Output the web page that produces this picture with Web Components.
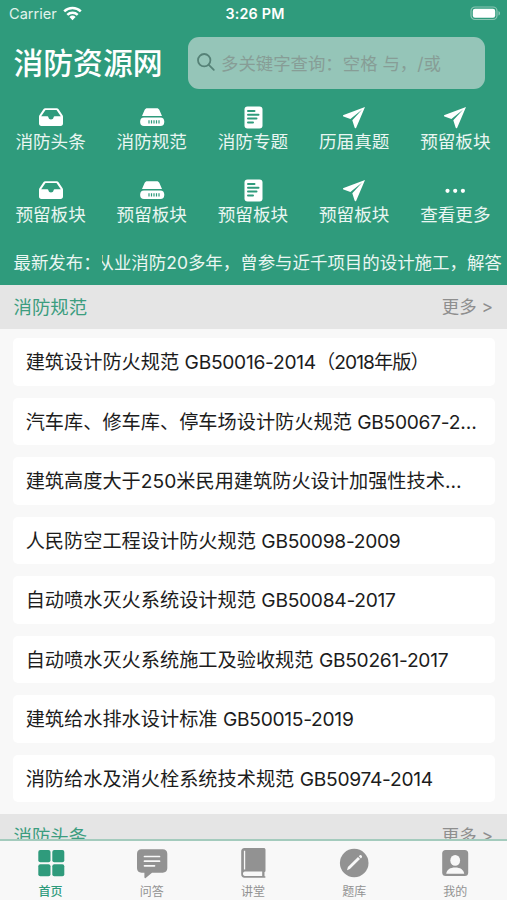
<!DOCTYPE html>
<html lang="zh-CN">
<head>
<meta charset="utf-8">
<title>消防资源网</title>
<style>
  body {
    margin: 0;
    font-family: Inter, "Noto Sans CJK SC", sans-serif;
  }
</style>
</head>
<body>
<fire-app></fire-app>

<script>
const icons = {
  inbox: `<svg width="26" height="24" viewBox="0 0 26 24"><path fill="#fff" fill-rule="evenodd" d="M7.2 3.2h11.6c.7 0 1.200.3 1.600.9l4 6c.4.500.6 1 .6 1.600v6.800c0 1.500-.9 2.500-2.400 2.500H3.400C1.900 21 1 20 1 18.500v-6.800c0-.6.2-1.100.6-1.600l4-6c.4-.6.9-.9 1.600-.9zM7.500 4.900 3.200 11.300h6.100c.6 0 1 .4 1.100 1 .3 1.400 1.300 2.200 2.600 2.200s2.300-.8 2.600-2.200c.1-.6.5-1 1.100-1h6.100L18.500 4.900z"/></svg>`,
  drive: `<svg width="26" height="24" viewBox="0 0 26 24"><g fill="#fff"><path d="M8.300 3.200h9.400c1.300 0 2.100.5 2.600 1.600l2.700 6.100H3l2.700-6.100c.5-1.100 1.300-1.600 2.600-1.600z"/><rect x="1.200" y="12.400" width="24" height="8.600" rx="3.800"/></g><path stroke="#2f9b7c" stroke-width="1.200" d="M10 15.200v3.200M12.500 15.200v3.200M15 15.200v3.200M17.500 15.200v3.200M20 15.200v3.200"/></svg>`,
  doc: `<svg width="26" height="24" viewBox="0 0 26 24"><rect x="4.500" y="1.500" width="18" height="22" rx="3" fill="#fff"/><path stroke="#2f9b7c" stroke-width="2" stroke-linecap="round" d="M8 6h6.500M8 9.800h10.500M8 13.600h8.500M8 17.400h5"/></svg>`,
  plane: `<svg width="26" height="24" viewBox="0 0 26 24"><path fill="#fff" d="M24 1.900 2.600 10c-.8.300-.8 1.100-.1 1.500l6.900 2.500L21.200 4.600 11.300 15.200l2.300 7.400c.3.800 1.200.9 1.600.1z"/></svg>`,
  more: `<svg width="26" height="24" viewBox="0 0 26 24"><g fill="#fff"><circle cx="5.500" cy="12.800" r="2.100"/><circle cx="13.200" cy="12.800" r="2.100"/><circle cx="20.900" cy="12.800" r="2.100"/></g></svg>`,
  home: `<svg width="32" height="32" viewBox="0 0 32 32"><g fill="currentColor"><rect x="3.300" y="3" width="12.200" height="12.300" rx="2"/><rect x="17.300" y="3" width="12" height="12.300" rx="2"/><rect x="3.300" y="17.200" width="12.200" height="12" rx="2"/><rect x="17.300" y="17.200" width="12" height="12" rx="2"/></g></svg>`,
  chat: `<svg width="32" height="32" viewBox="0 0 32 32"><path fill="currentColor" d="M5.500 2.300h21.200c2.800 0 4.600 1.700 4.600 4.500v14.500c0 2.700-1.800 4.400-4.600 4.400H16l-6.300 5.200c-.7.500-1.300.2-1.300-.6v-4.600H5.500c-2.800 0-4.500-1.700-4.500-4.400V6.800c0-2.800 1.700-4.500 4.500-4.500z"/><path stroke="#f8f8f8" stroke-width="1.700" stroke-linecap="round" d="M8.500 9.500h15M8.500 14.200h15M8.500 18.800h10"/></svg>`,
  book: `<svg width="32" height="32" viewBox="0 0 32 32"><path fill="currentColor" fill-rule="evenodd" d="M7.500 1h19.200c1 0 1.800.7 1.800 1.700v21c0 .7-.4 1.200-1 1.400v4.100h.5c.7 0 .7 1.600 0 1.600H7.500c-2.100 0-3.300-1.500-3.300-3.500v-23C4.200 2.400 5.400 1 7.500 1zm-.6 2.700v18.800h1.300V3.700zm1 20.700c-2.600 0-2.600 4.600 0 4.600h17.300v-4.600z"/></svg>`,
  pencil: `<svg width="32" height="32" viewBox="0 0 32 32"><circle cx="16.200" cy="16" r="14.300" fill="currentColor"/><path fill="#f8f8f8" d="m9 23.200.9-3.200L20 10l2 2-10.100 10.100zM20.800 9.200l.8-.8c1.200-1 3.200.9 2.200 2.200l-.9.800z"/></svg>`,
  person: `<svg width="32" height="32" viewBox="0 0 32 32"><rect x="3.200" y="3" width="26" height="26" rx="3.500" fill="currentColor"/><ellipse cx="16.200" cy="13.400" rx="4.900" ry="5.400" fill="#f8f8f8"/><path fill="#f8f8f8" d="M7.200 26.800c.6-4.200 4-6.200 9-6.200s8.400 2 9 6.200z"/></svg>`
};

class StatusBar extends HTMLElement {
  constructor() {
    super();
    this.attachShadow({ mode: 'open' }).innerHTML = `
      <style>
        :host {
          display: grid;
          grid-template-columns: 1fr auto 1fr;
          align-items: center;
          height: 27px;
          padding: 0 6px 0 9px;
          color: #fff;
          font-size: 14.600px;
        }
        .left { display: flex; align-items: center; gap: 6px; color: #e2f2ec; }
        .time { font-size: 14.300px; font-weight: 600; letter-spacing: .2px; }
        svg { display: block; }
        .battery { justify-self: end; }
      </style>
      <div class="left">
        <span>Carrier</span>
        <svg width="19" height="15" viewBox="0 0 19 15"><g fill="none" stroke="#fff" stroke-width="2.500"><path d="M1.200 5.300a12 12 0 0 1 16.600 0"/><path d="M4.300 8.900a7.500 7.500 0 0 1 10.400 0"/></g><path fill="#fff" d="M6.400 11a4.500 4.500 0 0 1 6.200 0l-3.100 3.200z"/></svg>
      </div>
      <span class="time">3:26 PM</span>
      <svg class="battery" width="31" height="15" viewBox="0 0 31 15"><rect x="1" y="1" width="26" height="12.500" rx="4" fill="none" stroke="#8bc6b4" stroke-width="1.200"/><rect x="2.800" y="2.700" width="22.400" height="9.100" rx="2.200" fill="#fff"/><path fill="#8bc6b4" d="M28.500 5c2 .8 2 3.800 0 4.600z"/></svg>
    `;
  }
}

class SearchBox extends HTMLElement {
  constructor() {
    super();
    this.attachShadow({ mode: 'open' }).innerHTML = `
      <style>
        :host {
          display: flex;
          align-items: center;
          box-sizing: border-box;
          width: 297px;
          height: 52px;
          padding: 0 0 2px 8px;
          gap: 5px;
          border-radius: 11px;
          background: #95c5b8;
          color: #879d96;
          font-size: 17.400px;
          white-space: nowrap;
        }
      </style>
      <svg width="20" height="20" viewBox="0 0 20 20" fill="none" stroke="#568277" stroke-width="1.800" stroke-linecap="round"><circle cx="8.200" cy="8.200" r="6.200"/><path d="m12.800 12.800 5 5"/></svg>
      <span><slot></slot></span>
    `;
  }
}

class GridEntry extends HTMLElement {
  constructor() {
    super();
    this.attachShadow({ mode: 'open' }).innerHTML = `
      <style>
        :host {
          display: flex;
          flex-direction: column;
          align-items: center;
          gap: 1px;
          height: 73px;
          color: #eaf6f2;
          font-size: 17.600px;
          line-height: 24px;
          white-space: nowrap;
        }
        svg { display: block; }
      </style>
      ${icons[this.getAttribute('icon')]}
      <span><slot></slot></span>
    `;
  }
}

class NewsTicker extends HTMLElement {
  constructor() {
    super();
    this.attachShadow({ mode: 'open' }).innerHTML = `
      <style>
        :host {
          display: flex;
          height: 34px;
          padding: 0 5px 0 13.500px;
          color: #eaf6f2;
          font-size: 17.450px;
          line-height: 24px;
          white-space: nowrap;
        }
        .label { flex: 0 0 88px; }
        .view { flex: 1; display: flex; overflow: hidden; }
        .move { margin-left: -5px; }
      </style>
      <span class="label">最新发布：</span>
      <div class="view"><span class="move"><slot></slot></span></div>
    `;
  }
}

class SectionHead extends HTMLElement {
  constructor() {
    super();
    this.attachShadow({ mode: 'open' }).innerHTML = `
      <style>
        :host {
          display: flex;
          justify-content: space-between;
          align-items: center;
          box-sizing: border-box;
          height: 44px;
          padding: 0 14px 0 13.500px;
          background: #e5e5e5;
          color: #3c9d7f;
          font-size: 18.400px;
          line-height: 26px;
        }
        .more { color: #8e8e8e; font-size: 17.400px; }
      </style>
      <slot></slot>
      <span class="more">更多 &gt;</span>
    `;
  }
}

class ArticleRow extends HTMLElement {
  constructor() {
    super();
    this.attachShadow({ mode: 'open' }).innerHTML = `
      <style>
        :host {
          display: block;
          box-sizing: border-box;
          height: 47.500px;
          padding: 1px 15px 0 12.700px;
          border-radius: 5px;
          background: #fff;
          color: #1c1c1c;
          font-size: 19.200px;
          line-height: 47px;
        }
        .text {
          overflow: hidden;
          text-overflow: ellipsis;
          white-space: nowrap;
        }
        ::slotted(span) { letter-spacing: -.280px; }
        ::slotted(.year) { letter-spacing: -.9px; }
      </style>
      <div class="text"><slot></slot></div>
    `;
  }
}

class TabItem extends HTMLElement {
  constructor() {
    super();
    this.attachShadow({ mode: 'open' }).innerHTML = `
      <style>
        :host {
          display: flex;
          flex-direction: column;
          align-items: center;
          gap: 4px;
          color: #929292;
          font-size: 12px;
          line-height: 17px;
        }
        :host([active]) { color: #2f9b7c; font-weight: 500; }
        svg { display: block; }
      </style>
      ${icons[this.getAttribute('icon')]}
      <span><slot></slot></span>
    `;
  }
}

class FireApp extends HTMLElement {
  constructor() {
    super();
    this.attachShadow({ mode: 'open' }).innerHTML = `
      <style>
        :host {
          display: flex;
          flex-direction: column;
          width: 507px;
          height: 900px;
          overflow: hidden;
          background: #f8f8f8;
        }
        header {
          flex: none;
          box-sizing: border-box;
          height: 285px;
          background: #2f9b7c;
        }
        .brand {
          display: flex;
          align-items: center;
          justify-content: space-between;
          height: 52px;
          padding: 10px 22px 0 13.500px;
        }
        h1 {
          margin: 0;
          color: #fff;
          font-size: 29.800px;
          font-weight: 500;
          line-height: 40px;
          white-space: nowrap;
        }
        .grid {
          display: grid;
          grid-template-columns: repeat(5, 101.200px);
          padding-top: 16px;
        }
        main {
          flex: 1;
          min-height: 0;
          overflow: hidden;
        }
        .list {
          display: flex;
          flex-direction: column;
          gap: 12px;
          padding: 9px 12px 12px 13px;
        }
        nav {
          flex: none;
          display: grid;
          grid-template-columns: repeat(5, 101.200px);
          box-sizing: border-box;
          height: 61px;
          padding-top: 6px;
          border-top: 2px solid #a4cbbd;
          background: #f8f8f8;
        }
      </style>
      <header>
        <status-bar></status-bar>
        <div class="brand">
          <h1>消防资源网</h1>
          <search-box>多关键字查询：空格 与，/或</search-box>
        </div>
        <div class="grid">
          <grid-entry icon="inbox">消防头条</grid-entry>
          <grid-entry icon="drive">消防规范</grid-entry>
          <grid-entry icon="doc">消防专题</grid-entry>
          <grid-entry icon="plane">历届真题</grid-entry>
          <grid-entry icon="plane">预留板块</grid-entry>
          <grid-entry icon="inbox">预留板块</grid-entry>
          <grid-entry icon="drive">预留板块</grid-entry>
          <grid-entry icon="doc">预留板块</grid-entry>
          <grid-entry icon="plane">预留板块</grid-entry>
          <grid-entry icon="more">查看更多</grid-entry>
        </div>
        <news-ticker>从业消防20多年，曾参与近千项目的设计施工，解答</news-ticker>
      </header>
      <main>
        <section-head>消防规范</section-head>
        <div class="list">
          <article-row>建筑设计防火规范 <span>GB50016-2014</span><span class="year">（2018年版）</span></article-row>
          <article-row>汽车库、修车库、停车场设计防火规范 <span>GB50067-2014</span></article-row>
          <article-row>建筑高度大于250米民用建筑防火设计加强性技术要求</article-row>
          <article-row>人民防空工程设计防火规范 <span>GB50098-2009</span></article-row>
          <article-row>自动喷水灭火系统设计规范 <span>GB50084-2017</span></article-row>
          <article-row>自动喷水灭火系统施工及验收规范 <span>GB50261-2017</span></article-row>
          <article-row>建筑给水排水设计标准 <span>GB50015-2019</span></article-row>
          <article-row>消防给水及消火栓系统技术规范 <span>GB50974-2014</span></article-row>
        </div>
        <section-head>消防头条</section-head>
      </main>
      <nav>
        <tab-item icon="home" active>首页</tab-item>
        <tab-item icon="chat">问答</tab-item>
        <tab-item icon="book">讲堂</tab-item>
        <tab-item icon="pencil">题库</tab-item>
        <tab-item icon="person">我的</tab-item>
      </nav>
    `;
  }
}

customElements.define('status-bar', StatusBar);
customElements.define('search-box', SearchBox);
customElements.define('grid-entry', GridEntry);
customElements.define('news-ticker', NewsTicker);
customElements.define('section-head', SectionHead);
customElements.define('article-row', ArticleRow);
customElements.define('tab-item', TabItem);
customElements.define('fire-app', FireApp);
</script>
</body>
</html>
